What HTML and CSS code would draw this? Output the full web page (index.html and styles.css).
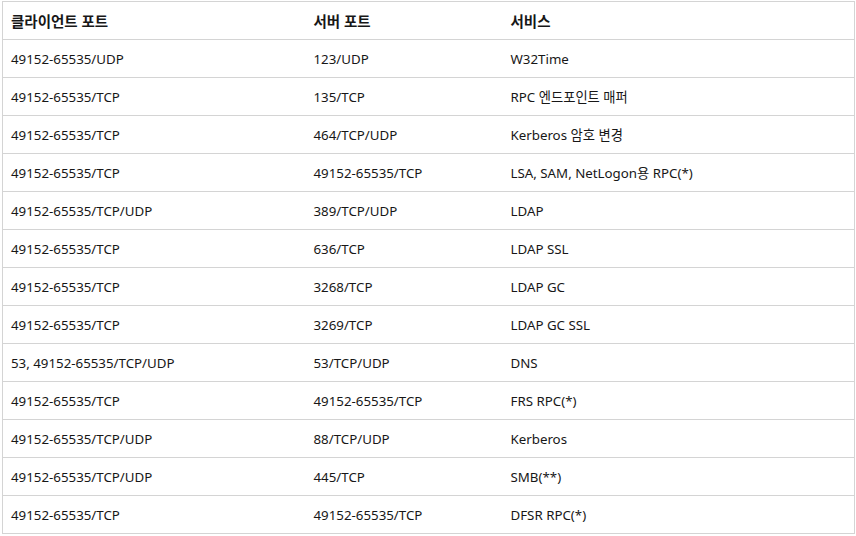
FILE: index.html
```html
<!DOCTYPE html>
<html lang="ko">
<head>
<meta charset="utf-8">
<link rel="stylesheet" href="styles.css">
</head>
<body>
<table class="ports">
  <colgroup>
    <col class="c1"><col class="c2"><col class="c3">
  </colgroup>
  <thead>
    <tr><th>클라이언트 포트</th><th>서버 포트</th><th>서비스</th></tr>
  </thead>
  <tbody>
    <tr><td>49152-65535/UDP</td><td>123/UDP</td><td>W32Time</td></tr>
    <tr><td>49152-65535/TCP</td><td>135/TCP</td><td>RPC 엔드포인트 매퍼</td></tr>
    <tr><td>49152-65535/TCP</td><td>464/TCP/UDP</td><td>Kerberos 암호 변경</td></tr>
    <tr><td>49152-65535/TCP</td><td>49152-65535/TCP</td><td>LSA, SAM, NetLogon용 RPC(*)</td></tr>
    <tr><td>49152-65535/TCP/UDP</td><td>389/TCP/UDP</td><td>LDAP</td></tr>
    <tr><td>49152-65535/TCP</td><td>636/TCP</td><td>LDAP SSL</td></tr>
    <tr><td>49152-65535/TCP</td><td>3268/TCP</td><td>LDAP GC</td></tr>
    <tr><td>49152-65535/TCP</td><td>3269/TCP</td><td>LDAP GC SSL</td></tr>
    <tr><td>53, 49152-65535/TCP/UDP</td><td>53/TCP/UDP</td><td>DNS</td></tr>
    <tr><td>49152-65535/TCP</td><td>49152-65535/TCP</td><td>FRS RPC(*)</td></tr>
    <tr><td>49152-65535/TCP/UDP</td><td>88/TCP/UDP</td><td>Kerberos</td></tr>
    <tr><td>49152-65535/TCP/UDP</td><td>445/TCP</td><td>SMB(**)</td></tr>
    <tr><td>49152-65535/TCP</td><td>49152-65535/TCP</td><td>DFSR RPC(*)</td></tr>
  </tbody>
</table>
</body>
</html>
```
FILE: styles.css
```css
html, body {
  margin: 0;
  padding: 0;
  background: #ffffff;
}
body {
  padding: 1px 0 0 2px;
  font-family: "Noto Sans", "Noto Sans CJK KR", sans-serif;
  font-size: 13.3px;
  color: #171717;
}
.ports {
  border-collapse: collapse;
  width: 852px;
  table-layout: fixed;
  border: 1px solid #d4d4d4;
}
.c1 { width: 303px; }
.c2 { width: 197px; }
.c3 { width: 352px; }
.ports th, .ports td {
  height: 38px;
  padding: 0 8px;
  box-sizing: border-box;
  text-align: left;
  vertical-align: middle;
  border-bottom: 1px solid #d4d4d4;
  white-space: nowrap;
}
.ports th {
  font-weight: 700;
  font-size: 14.5px;
}
.ports td {
  font-weight: 400;
}
```
